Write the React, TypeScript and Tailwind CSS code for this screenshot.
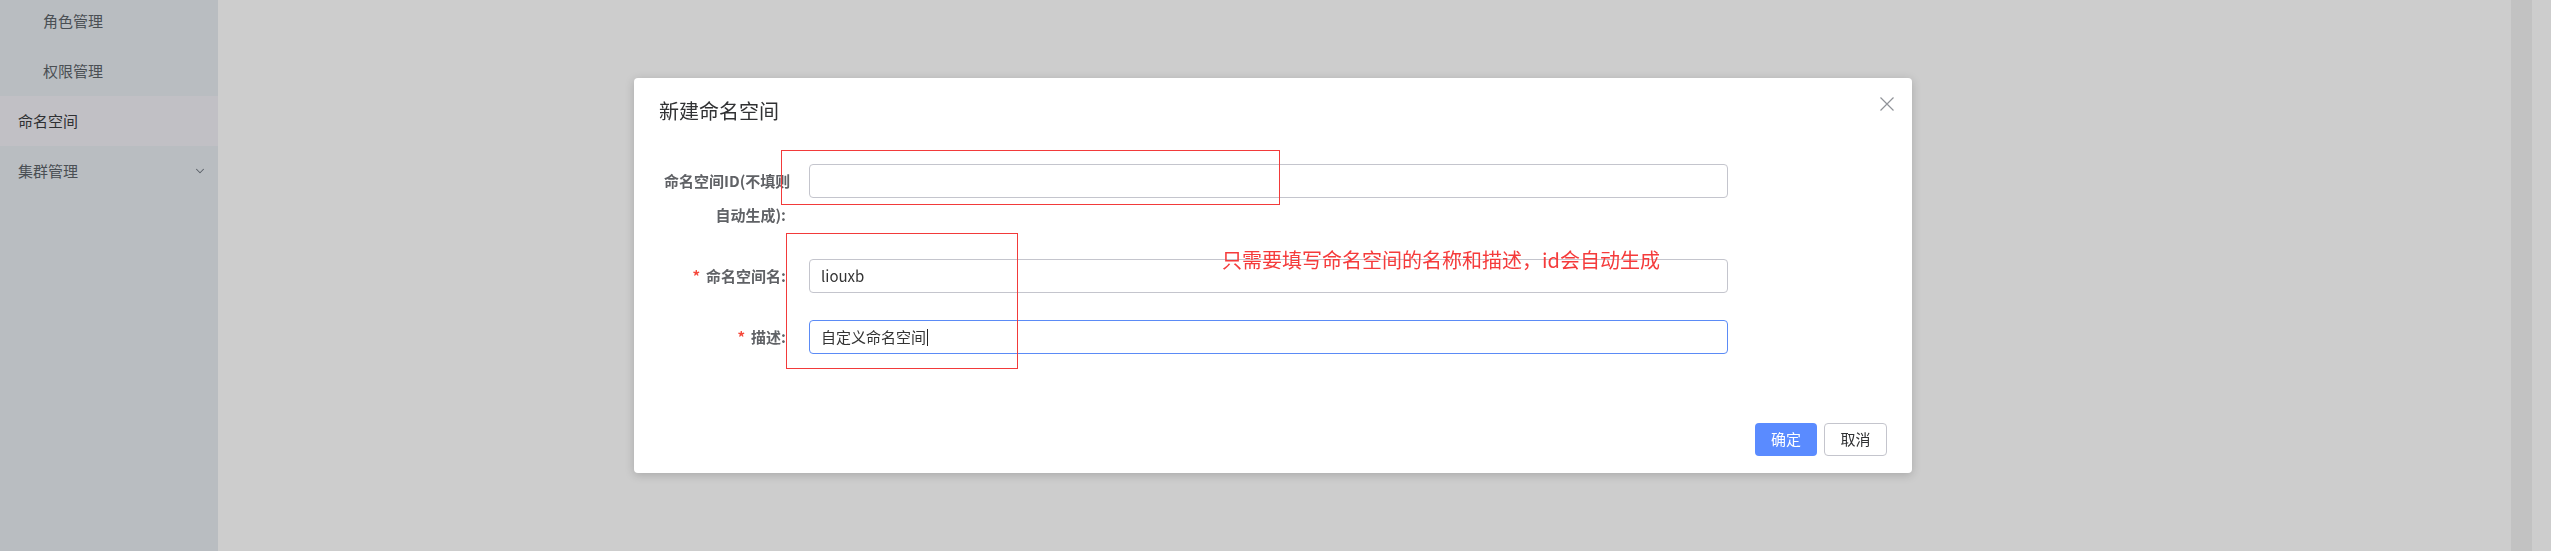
import { ChevronDown } from "lucide-react"

const font = { fontFamily: '"Noto Sans CJK SC", "Noto Sans", sans-serif' }

function SideItem({ label, sub, active, arrow }: { label: string; sub?: boolean; active?: boolean; arrow?: boolean }) {
  return (
    <div
      className={`h-[50px] flex items-center justify-between text-[15px] ${sub ? "pl-[43px]" : "pl-[18px]"} pr-[11px] ${
        active ? "bg-[#c1c0c5] text-[#2f3033]" : "text-[#4a4f54]"
      }`}
    >
      <span>{label}</span>
      {arrow && <ChevronDown className="w-[14px] h-[14px] text-[#5a6068]" strokeWidth={1.8} />}
    </div>
  )
}

function Field({ label, required, children }: { label: React.ReactNode; required?: boolean; children: React.ReactNode }) {
  return (
    <div className="flex items-start mb-[27px]">
      <div className="w-[145px] shrink-0 pr-[23px] text-right text-[15px] font-bold text-[#606266] leading-[34px]">
        {required && <span className="text-[#f5483b] mr-[6px]">*</span>}
        {label}
      </div>
      {children}
    </div>
  )
}

export default function App() {
  return (
    <div className="flex h-[551px] w-full overflow-hidden bg-[#cdcdcd]" style={font}>
      {/* sidebar */}
      <aside className="w-[218px] shrink-0 bg-[#b9bdc1]">
        <div className="-mt-[4px]">
          <SideItem label="角色管理" sub />
          <SideItem label="权限管理" sub />
          <SideItem label="命名空间" active />
          <SideItem label="集群管理" arrow />
        </div>
      </aside>

      {/* main */}
      <main className="flex-1 flex">
        <div className="flex-1" />
        <div className="w-[21px] bg-[#c2c2c2]" />
        <div className="w-[19px]" />
      </main>

      {/* dialog overlay */}
      <div className="fixed inset-0 pl-[634px] pt-[78px]">
        <div className="relative w-[1278px] h-[395px] bg-white rounded-[4px] shadow-[0_2px_10px_rgba(0,0,0,0.18)] flex flex-col">
          <div className="pl-[25px] pt-[21px]">
            <h2 className="text-[20px] leading-[24px] text-[#303133]">新建命名空间</h2>
          </div>
          <button className="absolute right-[17px] top-[18px] w-[16px] h-[16px] text-[#909399]">
            <svg viewBox="0 0 16 16" className="w-[16px] h-[16px]" fill="none" stroke="currentColor" strokeWidth="1.2">
              <path d="M1.5 1.5 L14.5 14.5 M14.5 1.5 L1.5 14.5" />
            </svg>
          </button>

          <form className="mt-[41px] pl-[30px]">
            <Field label={<><span className="whitespace-nowrap">命名空间ID(不填则</span><br />自动生成):</>}>
              <div className="w-[919px] h-[34px] rounded-[4px] border border-[#c4c5cd] bg-white" />
            </Field>
            <Field label="命名空间名:" required>
              <div className="w-[919px] h-[34px] rounded-[4px] border border-[#c4c5cd] bg-white flex items-center pl-[11px] text-[15px] text-[#333]">
                liouxb
              </div>
            </Field>
            <Field label="描述:" required>
              <div className="w-[919px] h-[34px] rounded-[4px] border border-[#5b8bf6] bg-white flex items-center pl-[11px] text-[15px] text-[#333]">
                自定义命名空间
                <span className="inline-block w-px h-[17px] bg-[#222] ml-px" />
              </div>
            </Field>
          </form>

          <div className="mt-auto pb-[17px] pr-[25px] flex justify-end gap-[7px]">
            <button className="w-[62px] h-[33px] rounded-[4px] bg-[#5a8bff] text-white text-[15px]">确定</button>
            <button className="w-[63px] h-[33px] rounded-[4px] border border-[#c4c5cd] bg-white text-[#303133] text-[15px]">取消</button>
          </div>

          {/* red annotations */}
          <div className="absolute left-[147px] top-[72px] w-[499px] h-[55px] border border-[#f23a3a]" />
          <div className="absolute left-[152px] top-[155px] w-[232px] h-[136px] border border-[#f23a3a]" />
          <div className="absolute left-[588px] top-[168px] text-[20px] leading-[28px] text-[#f53b3b] whitespace-nowrap">
            只需要填写命名空间的名称和描述，id会自动生成
          </div>
        </div>
      </div>
    </div>
  )
}
